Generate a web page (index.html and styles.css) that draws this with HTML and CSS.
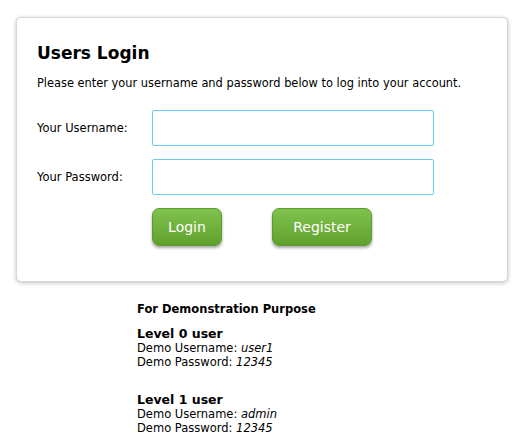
FILE: index.html
```html
<!DOCTYPE html>
<html>
<head>
<meta charset="utf-8">
<link rel="stylesheet" href="styles.css">
</head>
<body>
<div class="card">
  <h1 class="title">Users Login</h1>
  <p class="intro">Please enter your username and password below to log into your account.</p>
  <div class="row">
    <label class="label">Your Username:</label>
    <input class="field" type="text">
  </div>
  <div class="row">
    <label class="label">Your Password:</label>
    <input class="field" type="password">
  </div>
  <div class="actions">
    <button class="btn btn-login">Login</button>
    <button class="btn btn-register">Register</button>
  </div>
</div>
<div class="demo">
  <div class="demo-head">For Demonstration Purpose</div>
  <div class="level">
    <div class="level-title">Level 0 user</div>
    <div>Demo Username: <em>user1</em></div>
    <div>Demo Password: <em>12345</em></div>
  </div>
  <div class="level">
    <div class="level-title">Level 1 user</div>
    <div>Demo Username: <em>admin</em></div>
    <div>Demo Password: <em>12345</em></div>
  </div>
</div>
</body>
</html>
```
FILE: styles.css
```css
html, body {
  margin: 0;
  padding: 0;
  background: #ffffff;
}
body {
  font-family: "DejaVu Sans", Verdana, sans-serif;
  color: #000;
  padding: 17px 0 0 16px;
}
.card {
  box-sizing: border-box;
  width: 492px;
  height: 265px;
  border: 1px solid #d6d6d6;
  border-radius: 5px;
  box-shadow: 0 1px 4px rgba(0,0,0,0.25);
  padding: 24px 20px 0 20px;
  background: #fff;
}
.title {
  margin: 0;
  font-size: 17px;
  font-weight: bold;
  line-height: 22px;
}
.intro {
  margin: 12px 0 0 0;
  font-size: 11.4px;
  line-height: 14px;
}
.row {
  display: flex;
  align-items: center;
  margin-top: 20px;
}
.row + .row {
  margin-top: 13px;
}
.label {
  width: 115px;
  font-size: 11.5px;
}
.field {
  box-sizing: border-box;
  width: 282px;
  height: 36px;
  border: 1px solid #6ccaf7;
  border-radius: 2px;
  margin: 0;
  padding: 0 6px;
  background: #fff;
  outline: none;
}
.actions {
  display: flex;
  gap: 50px;
  margin: 13px 0 0 115px;
}
.btn {
  height: 38px;
  border: 1px solid #5e9b2e;
  border-radius: 7px;
  background: linear-gradient(#80c24e, #60a12d);
  color: #fff;
  font-family: "DejaVu Sans", Verdana, sans-serif;
  font-size: 14px;
  box-shadow: 0 2px 3px rgba(0,0,0,0.35);
  padding: 0;
}
.btn-login { width: 70px; }
.btn-register { width: 100px; }
.demo {
  margin: 20px 0 0 121px;
  font-size: 11.5px;
  line-height: 14px;
}
.demo-head {
  font-weight: bold;
  margin-bottom: 11px;
}
.level {
  margin-bottom: 24px;
}
.level-title {
  font-weight: bold;
  font-size: 12.5px;
}
```
